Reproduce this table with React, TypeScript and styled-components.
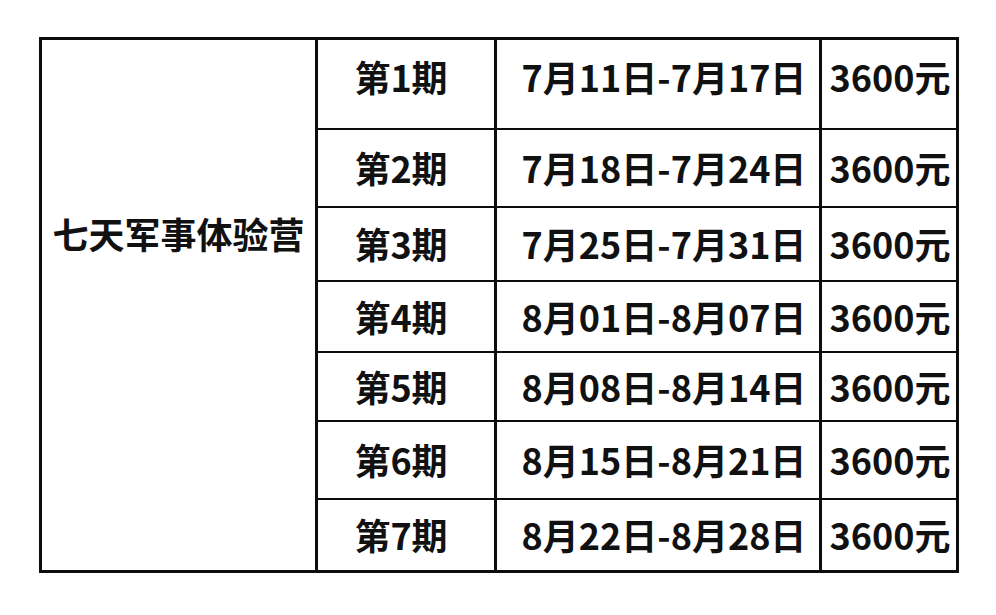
import React from 'react';
import styled, { createGlobalStyle } from 'styled-components';

const GlobalStyle = createGlobalStyle`
  html, body {
    margin: 0;
    padding: 0;
    background: #ffffff;
  }
  body {
    font-family: "Noto Sans CJK SC", "Noto Sans", sans-serif;
    color: #111111;
  }
`;

const Page = styled.div`
  width: 996px;
  height: 615px;
  padding: 37px 0 0 39px;
  box-sizing: border-box;
`;

const Table = styled.div`
  display: grid;
  grid-template-columns: 273px 176px 322px 134px;
  grid-template-rows: 88px 76px 72px 69px 67px 76px 70px;
  column-gap: 3px;
  row-gap: 2px;
  width: max-content;
  padding: 3px;
  background: #0d0d0d;
`;

const Cell = styled.div<{ $lift?: number }>`
  background: #ffffff;
  display: flex;
  align-items: center;
  justify-content: center;
  padding-bottom: ${({ $lift }) => ($lift ? `${$lift}px` : '0')};
  box-sizing: border-box;
  font-size: 36px;
  font-weight: 700;
  line-height: 1.2;
  white-space: nowrap;
  transform-origin: center;
`;

const CampCell = styled(Cell)`
  grid-column: 1;
  grid-row: 1 / span 7;
  align-items: flex-start;
  padding-top: 172px;
`;

const PeriodCell = styled(Cell)`
  padding-right: 10px;
`;

const DateCell = styled(Cell)`
  padding-left: 12px;
`;

const PriceCell = styled(Cell)`
  padding-left: 2px;
`;

const periods = [
  { name: '第1期', dates: '7月11日-7月17日', price: '3600元', lift: 14 },
  { name: '第2期', dates: '7月18日-7月24日', price: '3600元' },
  { name: '第3期', dates: '7月25日-7月31日', price: '3600元' },
  { name: '第4期', dates: '8月01日-8月07日', price: '3600元' },
  { name: '第5期', dates: '8月08日-8月14日', price: '3600元' },
  { name: '第6期', dates: '8月15日-8月21日', price: '3600元' },
  { name: '第7期', dates: '8月22日-8月28日', price: '3600元' },
];

export default function App() {
  return (
    <>
      <GlobalStyle />
      <Page>
        <Table>
          <CampCell>七天军事体验营</CampCell>
          {periods.map((p) => (
            <React.Fragment key={p.name}>
              <PeriodCell $lift={p.lift}>{p.name}</PeriodCell>
              <DateCell $lift={p.lift}>{p.dates}</DateCell>
              <PriceCell $lift={p.lift}>{p.price}</PriceCell>
            </React.Fragment>
          ))}
        </Table>
      </Page>
    </>
  );
}
